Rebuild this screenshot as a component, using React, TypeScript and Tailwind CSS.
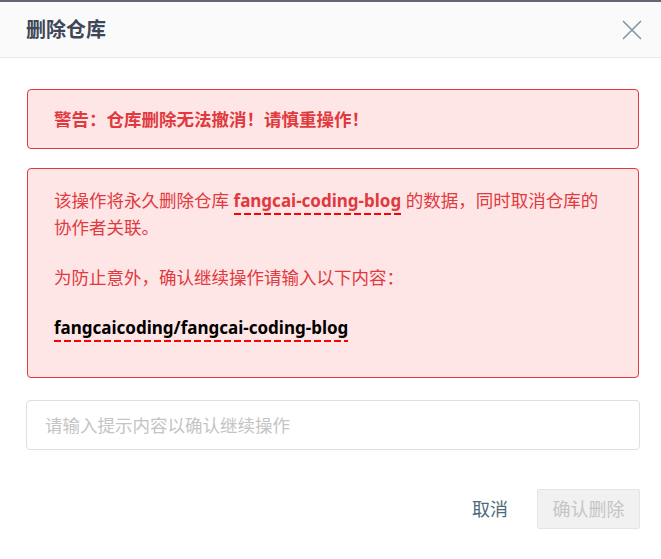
import { useState } from 'react';

const REPO = 'fangcai-coding-blog';
const FULL_NAME = 'fangcaicoding/fangcai-coding-blog';

function Dashed({ children, className = '' }: { children: React.ReactNode; className?: string }) {
  return (
    <span
      className={`text-[17px] font-bold pb-[3px] bg-[repeating-linear-gradient(to_right,#ff0000_0_7px,transparent_7px_10px)] bg-no-repeat bg-bottom bg-[length:100%_2px] ${className}`}
    >
      {children}
    </span>
  );
}

export default function App() {
  const [value, setValue] = useState('');
  const canDelete = value === FULL_NAME;

  return (
    <div
      className="w-[661px] h-[559px] bg-white overflow-hidden"
      style={{ fontFamily: '"Noto Sans", "Noto Sans CJK SC", sans-serif' }}
    >
      <div className="h-[2px] bg-[#63666e]" />
      <div className="h-[56px] bg-[#fafafa] border-b border-[#e8e8e8] flex items-center justify-between pl-[26px] pr-[18px]">
        <h2 className="text-[20px] font-bold text-[#3e4757]">删除仓库</h2>
        <button className="w-[22px] h-[22px] flex items-center justify-center text-[#7d97a3]">
          <svg width="22" height="22" viewBox="0 0 22 22" fill="none" stroke="currentColor" strokeWidth="1.6">
            <path d="M2 2 L20 20 M20 2 L2 20" />
          </svg>
        </button>
      </div>

      <div className="pl-[26px] pr-[21px] pt-[31px]">
        <div className="mx-px h-[60px] flex items-center px-[26px] bg-[#ffe6e6] border border-[#e0393e] rounded-[4px] text-[17.5px] font-bold text-[#e0393e]">
          警告：仓库删除无法撤消！请慎重操作！
        </div>

        <div className="mx-px mt-[19px] pt-[18px] pb-[36px] px-[26px] bg-[#ffe6e6] border border-[#e0393e] rounded-[4px] text-[17.5px] leading-[27px] text-[#e0393e]">
          <p>
            该操作将永久删除仓库 <Dashed>{REPO}</Dashed> 的数据，同时取消仓库的协作者关联。
          </p>
          <p className="mt-[23px]">为防止意外，确认继续操作请输入以下内容：</p>
          <p className="mt-[23px]">
            <Dashed className="text-black">{FULL_NAME}</Dashed>
          </p>
        </div>

        <input
          value={value}
          onChange={(e) => setValue(e.target.value)}
          placeholder="请输入提示内容以确认继续操作"
          className="mt-[22px] w-full h-[50px] px-[18px] border border-[#dcdfe6] rounded-[4px] text-[17.5px] text-[#333] placeholder:text-[#c4c4c4] outline-none"
        />

        <div className="mt-[39px] flex items-center justify-end gap-[29px]">
          <button className="text-[18px] text-[#4d6a7b]">取消</button>
          <button
            disabled={!canDelete}
            className="h-[40px] px-[14.5px] text-[18px] rounded-[2px] border border-[#e4e4e4] bg-[#f1f1f1] text-[#c5c5c5]"
          >
            确认删除
          </button>
        </div>
      </div>
    </div>
  );
}
